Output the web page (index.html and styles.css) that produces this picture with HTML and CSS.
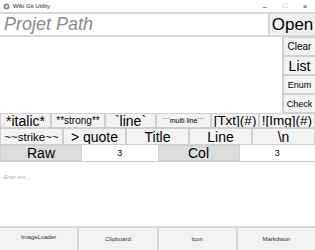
FILE: index.html
```html
<!DOCTYPE html>
<html>
<head>
<meta charset="utf-8">
<link rel="stylesheet" href="styles.css">
</head>
<body>
<div class="app">
  <div class="titlebar">
    <svg class="appicon" width="7" height="7" viewBox="0 0 7 7"><circle cx="3.5" cy="3.5" r="3" fill="#888"/><circle cx="3.5" cy="3.5" r="1.4" fill="#ddd"/></svg>
    <span class="title">Wiki Git Utility</span>
    <span class="ctrls"><span class="ctrl">–</span><span class="ctrl sq">□</span><span class="ctrl">×</span></span>
  </div>
  <div class="toprow">
    <div class="path">Projet Path</div>
    <div class="btn open">Open</div>
  </div>
  <div class="middle">
    <div class="area"></div>
    <div class="side">
      <div class="btn s-clear">Clear</div>
      <div class="btn s-list">List</div>
      <div class="btn s-enum">Enum</div>
      <div class="btn s-check">Check</div>
    </div>
  </div>
  <div class="row1">
    <div class="btn b-italic">*italic*</div>
    <div class="btn b-strong">**strong**</div>
    <div class="btn b-line">`line`</div>
    <div class="btn b-multi">```multi line```</div>
    <div class="btn b-txt">[Txt](#)</div>
    <div class="btn b-img">![Img](#)</div>
  </div>
  <div class="row2">
    <div class="btn b-strike">~~strike~~</div>
    <div class="btn">&gt; quote</div>
    <div class="btn">Title</div>
    <div class="btn">Line</div>
    <div class="btn">\n</div>
  </div>
  <div class="row3">
    <div class="lbl">Raw</div>
    <div class="num">3</div>
    <div class="lbl">Col</div>
    <div class="num">3</div>
  </div>
  <div class="editor"><span class="ph">Enter text...</span></div>
  <div class="bottom">
    <div class="bbtn up">ImageLoader</div>
    <div class="bbtn">Clipboard</div>
    <div class="bbtn">Icon</div>
    <div class="bbtn">Markdwon</div>
  </div>
</div>
</body>
</html>
```
FILE: styles.css
```css
* { box-sizing: border-box; }
html, body { margin: 0; padding: 0; background: #fff; }
body { font-family: "Liberation Sans", Arial, sans-serif; color: #000; }
.app { width: 315px; height: 250px; display: flex; flex-direction: column; overflow: hidden; }
.titlebar { height: 12px; display: flex; align-items: center; padding-left: 3px; font-size: 6px; color: #222; }
.appicon { margin-right: 3px; }
.title { flex: 1; }
.ctrls { display: flex; }
.ctrl { width: 20px; text-align: center; font-size: 8px; color: #333; }
.ctrl.sq { font-size: 7px; color: #999; }
.toprow { height: 25px; display: flex; border-top: 2px solid #d8d8d8; border-bottom: 2px solid #d8d8d8; }
.path { flex: 1; font-size: 18px; font-style: italic; color: #8a8a8a; padding-left: 4px; line-height: 21px; }
.btn { background: #f3f3f3; border: 1px solid #d0d0d0; display: flex; align-items: center; justify-content: center; white-space: nowrap; overflow: hidden; }
.open { width: 47px; font-size: 17px; border-width: 0 0 0 2px; background: #f0f0f0; }
.middle { height: 76px; display: flex; }
.area { flex: 1; border-right: 1px solid #d0d0d0; }
.side { width: 32px; display: flex; flex-direction: column; }
.side .btn { flex: 1; border-width: 1px 0 1px 1px; }
.s-clear { font-size: 10px; }
.s-list { font-size: 14px; }
.s-enum { font-size: 9px; }
.s-check { font-size: 9px; }
.row1 { height: 15px; display: flex; }
.row1 .btn { font-size: 14px; }
.row1 .b-italic { width: 51px; }
.row1 .b-strong { width: 54px; font-size: 10px; }
.row1 .b-line { width: 51px; }
.row1 .b-multi { width: 55px; font-size: 7px; }
.row1 .b-txt { width: 48px; font-size: 13.5px; }
.row1 .b-img { flex: 1; font-size: 13.5px; }
.row2 { height: 17px; display: flex; }
.row2 .btn { flex: 1; font-size: 14px; }
.row2 .b-strike { font-size: 11.5px; }
.row3 { height: 17px; display: flex; border-bottom: 1px solid #c8c8c8; }
.lbl { width: 82px; background: #dcdcdc; border: 1px solid #d0d0d0; font-size: 14px; display: flex; align-items: center; justify-content: center; }
.num { flex: 1; background: #fff; font-size: 9px; display: flex; align-items: center; justify-content: center; }
.editor { flex: 1; padding: 3px 4px; }
.ph { font-size: 5px; font-style: italic; color: #aaa; }
.bottom { height: 24px; display: flex; border-top: 2px solid #d8d8d8; }
.bbtn { flex: 1; background: #f2f2f2; border-right: 2px solid #d8d8d8; font-size: 6px; color: #333; display: flex; align-items: center; justify-content: center; }
.bbtn:last-child { border-right: none; }
.bbtn.up { align-items: flex-start; padding-top: 6px; }
```
